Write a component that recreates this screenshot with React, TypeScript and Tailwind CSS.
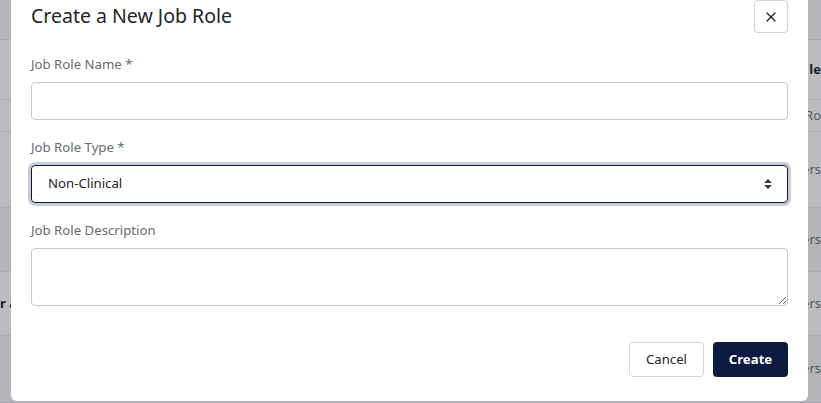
import { X } from 'lucide-react';

const font = { fontFamily: '"Noto Sans", "Open Sans", sans-serif' };

// background table rows (behind the dimmed overlay)
const rows = [
  { h: 'h-[40px]', bg: 'bg-[#b5b6ba]', left: '', right: '' },
  { h: 'h-[60px]', bg: 'bg-[#bbbcc0]', left: '', right: 'le', bold: true },
  { h: 'h-[32px]', bg: 'bg-[#bbbcc0]', left: '', right: 'Ro' },
  { h: 'h-[76px]', bg: 'bg-[#bbbcc0]', left: '', right: 'ers' },
  { h: 'h-[64px]', bg: 'bg-[#b4b5b9]', left: '', right: 'ers' },
  { h: 'h-[64px]', bg: 'bg-[#bbbcc0]', left: 'r a', right: 'ers' },
  { h: 'h-[67px]', bg: 'bg-[#b4b5b9]', left: '', right: 'ers' },
];

export default function App() {
  return (
    <div className="relative h-[403px] w-full overflow-hidden bg-[#bbbcc0]" style={font}>
      {/* dimmed page behind the modal */}
      <div className="flex flex-col">
        {rows.map((r, i) => (
          <div
            key={i}
            className={`${r.h} ${r.bg} flex items-center justify-between border-b border-[#a9aaae] text-[13px]`}
          >
            <span className="font-bold text-[#0d1b3e]">{r.left}</span>
            <span className={r.bold ? 'font-bold text-[#1b1c20]' : 'text-[#54565c]'}>{r.right}</span>
          </div>
        ))}
      </div>

      {/* modal */}
      <div className="absolute left-[11px] right-[13px] top-0 bottom-[2px] rounded-b-[6px] bg-white flex flex-col">
        <div className="flex h-[32px] items-center justify-between px-[20px]">
          <h2 className="text-[19.5px] font-normal text-[#212529]">Create a New Job Role</h2>
          <button className="flex h-[33px] w-[34px] items-center justify-center self-start rounded-[4px] border border-[#ced4da] bg-white text-[#212529]">
            <X size={16} strokeWidth={2} />
          </button>
        </div>

        <div className="flex flex-col px-[20px] pt-[22px]">
          <label className="text-[13.2px] leading-[20px] text-[#666b75]">Job Role Name *</label>
          <input className="mt-[8px] h-[38px] w-full rounded-[4px] border border-[#c5c9cf] px-[16px] text-[13.2px] outline-none" />

          <label className="mt-[17px] text-[13.2px] leading-[20px] text-[#666b75]">Job Role Type *</label>
          <div className="mt-[8px] flex h-[38px] w-full items-center justify-between rounded-[4px] border border-[#0b1a3f] px-[16px] text-[13.2px] text-[#212529] shadow-[0_0_0_3px_#c9cbd2]">
            <span>Non-Clinical</span>
            <svg width="10" height="14" viewBox="0 0 10 14" className="mr-[-2px]">
              <path d="M5 2 L9 6 H1 Z" fill="#343a40" />
              <path d="M5 12 L9 8 H1 Z" fill="#343a40" />
            </svg>
          </div>

          <label className="mt-[17px] text-[13.2px] leading-[20px] text-[#666b75]">Job Role Description</label>
          <textarea className="mt-[8px] h-[58px] w-full resize-y rounded-[4px] border border-[#c5c9cf] px-[16px] py-[8px] text-[13.2px] outline-none" />
        </div>

        <div className="mt-[36px] flex justify-end gap-[9px] px-[20px]">
          <button className="h-[35px] w-[75px] rounded-[4px] border border-[#ced4da] bg-white text-[13.2px] text-[#212529]">
            Cancel
          </button>
          <button className="h-[35px] w-[75px] rounded-[4px] bg-[#0a1a40] text-[13.2px] font-bold text-white">
            Create
          </button>
        </div>
      </div>
    </div>
  );
}
